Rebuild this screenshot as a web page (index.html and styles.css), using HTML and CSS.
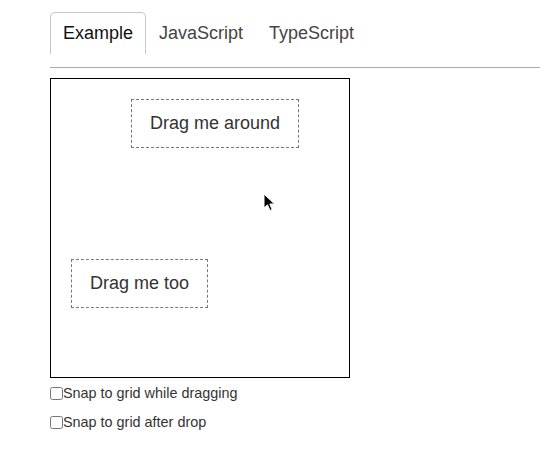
FILE: index.html
```html
<!DOCTYPE html>
<html>
<head>
<meta charset="utf-8">
<link rel="stylesheet" href="styles.css">
</head>
<body>
<div class="page">
  <div class="tabs">
    <div class="tab active">Example</div>
    <div class="tab">JavaScript</div>
    <div class="tab">TypeScript</div>
  </div>
  <div class="rule"></div>
  <div class="board">
    <div class="box box-a">Drag me around</div>
    <div class="box box-b">Drag me too</div>
  </div>
  <div class="options">
    <label class="option"><input type="checkbox" class="check">Snap to grid while dragging</label>
    <label class="option"><input type="checkbox" class="check">Snap to grid after drop</label>
  </div>
</div>
<svg class="cursor" width="14" height="20" viewBox="0 0 14 20"><path d="M1 1 L1 15 L4.5 11.8 L7 17.5 L9.2 16.6 L6.8 11 L11.5 11 Z" fill="#000" stroke="#fff" stroke-width="1"/></svg>
</body>
</html>
```
FILE: styles.css
```css
html, body {
  margin: 0;
  padding: 0;
  background: #fff;
}
body {
  font-family: "Liberation Sans", Arial, sans-serif;
  color: #333;
  position: relative;
  height: 454px;
  overflow: hidden;
}
.page {
  padding: 12px 0 0 50px;
}
.tabs {
  display: flex;
}
.tab {
  font-size: 18px;
  line-height: 21px;
  padding: 10px 12px;
  border: 1px solid transparent;
  border-bottom: 0;
  border-radius: 5px 5px 0 0;
  color: #444;
}
.tab.active {
  border-color: #c8c8c8;
  color: #111;
}
.rule {
  margin-top: 13px;
  height: 1px;
  background: #aaa;
}
.board {
  margin-top: 10px;
  width: 300px;
  height: 300px;
  box-sizing: border-box;
  border: 1px solid #000;
  position: relative;
}
.box {
  position: absolute;
  border: 1px dashed #777;
  padding: 13px 18px;
  font-size: 18px;
  line-height: 21px;
  color: #333;
  white-space: nowrap;
}
.box-a { left: 80px; top: 20px; }
.box-b { left: 20px; top: 180px; }
.options {
  padding-top: 7px;
  display: flex;
  flex-direction: column;
  gap: 13px;
}
.option {
  display: flex;
  align-items: center;
  height: 16px;
  font-size: 14.4px;
  color: #333;
}
.check {
  margin: 0;
  width: 13px;
  height: 13px;
}
.cursor {
  position: absolute;
  left: 263px;
  top: 193px;
}
```
